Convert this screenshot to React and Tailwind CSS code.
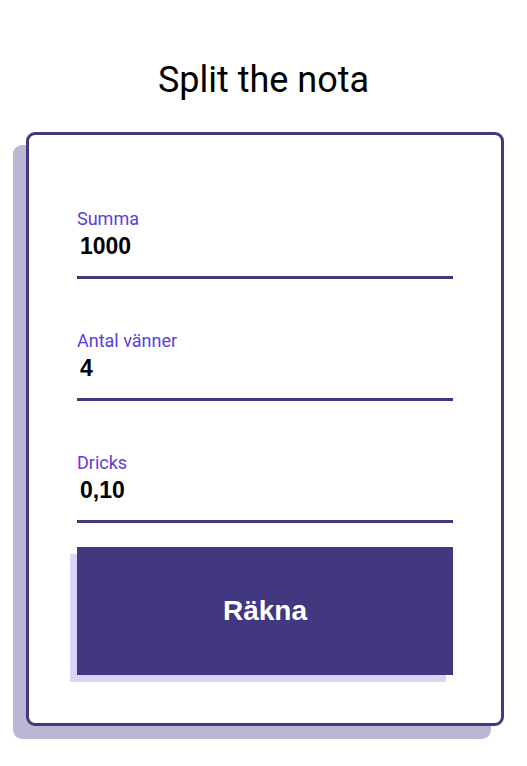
// App.jsx — "Split the nota" bill splitter card

const fields = [
  { label: 'Summa', value: '1000' },
  { label: 'Antal vänner', value: '4' },
  { label: 'Dricks', value: '0,10' },
]

function Field({ label, value }) {
  return (
    <label className="block">
      <span className="block text-[18px] leading-[21px] text-[#5a3ee0] font-['Roboto',sans-serif]">{label}</span>
      <input
        readOnly
        defaultValue={value}
        className="block w-full pl-[3px] pt-[4px] pb-[17px] h-[50px] leading-[26px] text-[23px] font-bold text-black bg-transparent outline-none border-b-[3px] border-[#41387f] font-['Liberation_Sans',Arial,sans-serif]"
      />
    </label>
  )
}

export default function App() {
  return (
    <div className="min-h-[766px] bg-white pt-[59px] font-['Roboto',sans-serif]">
      <h1 className="text-center text-[36px] leading-[42px] text-black">Split the nota</h1>

      <div className="mt-[31px] ml-[26px] w-[478px] rounded-[9px] border-[3px] border-[#41387f] bg-white px-[48px] pt-[73px] pb-[48px] shadow-[-13px_13px_0_#bab6d3]">
        <div className="flex flex-col gap-[51px]">
          {fields.map(f => <Field key={f.label} {...f} />)}
        </div>

        <button className="mt-[24px] w-full h-[128px] bg-[#41387f] text-white text-[28px] font-bold font-['Liberation_Sans',Arial,sans-serif] shadow-[-7px_7px_0_#dbd5f5]">
          Räkna
        </button>
      </div>
    </div>
  )
}
